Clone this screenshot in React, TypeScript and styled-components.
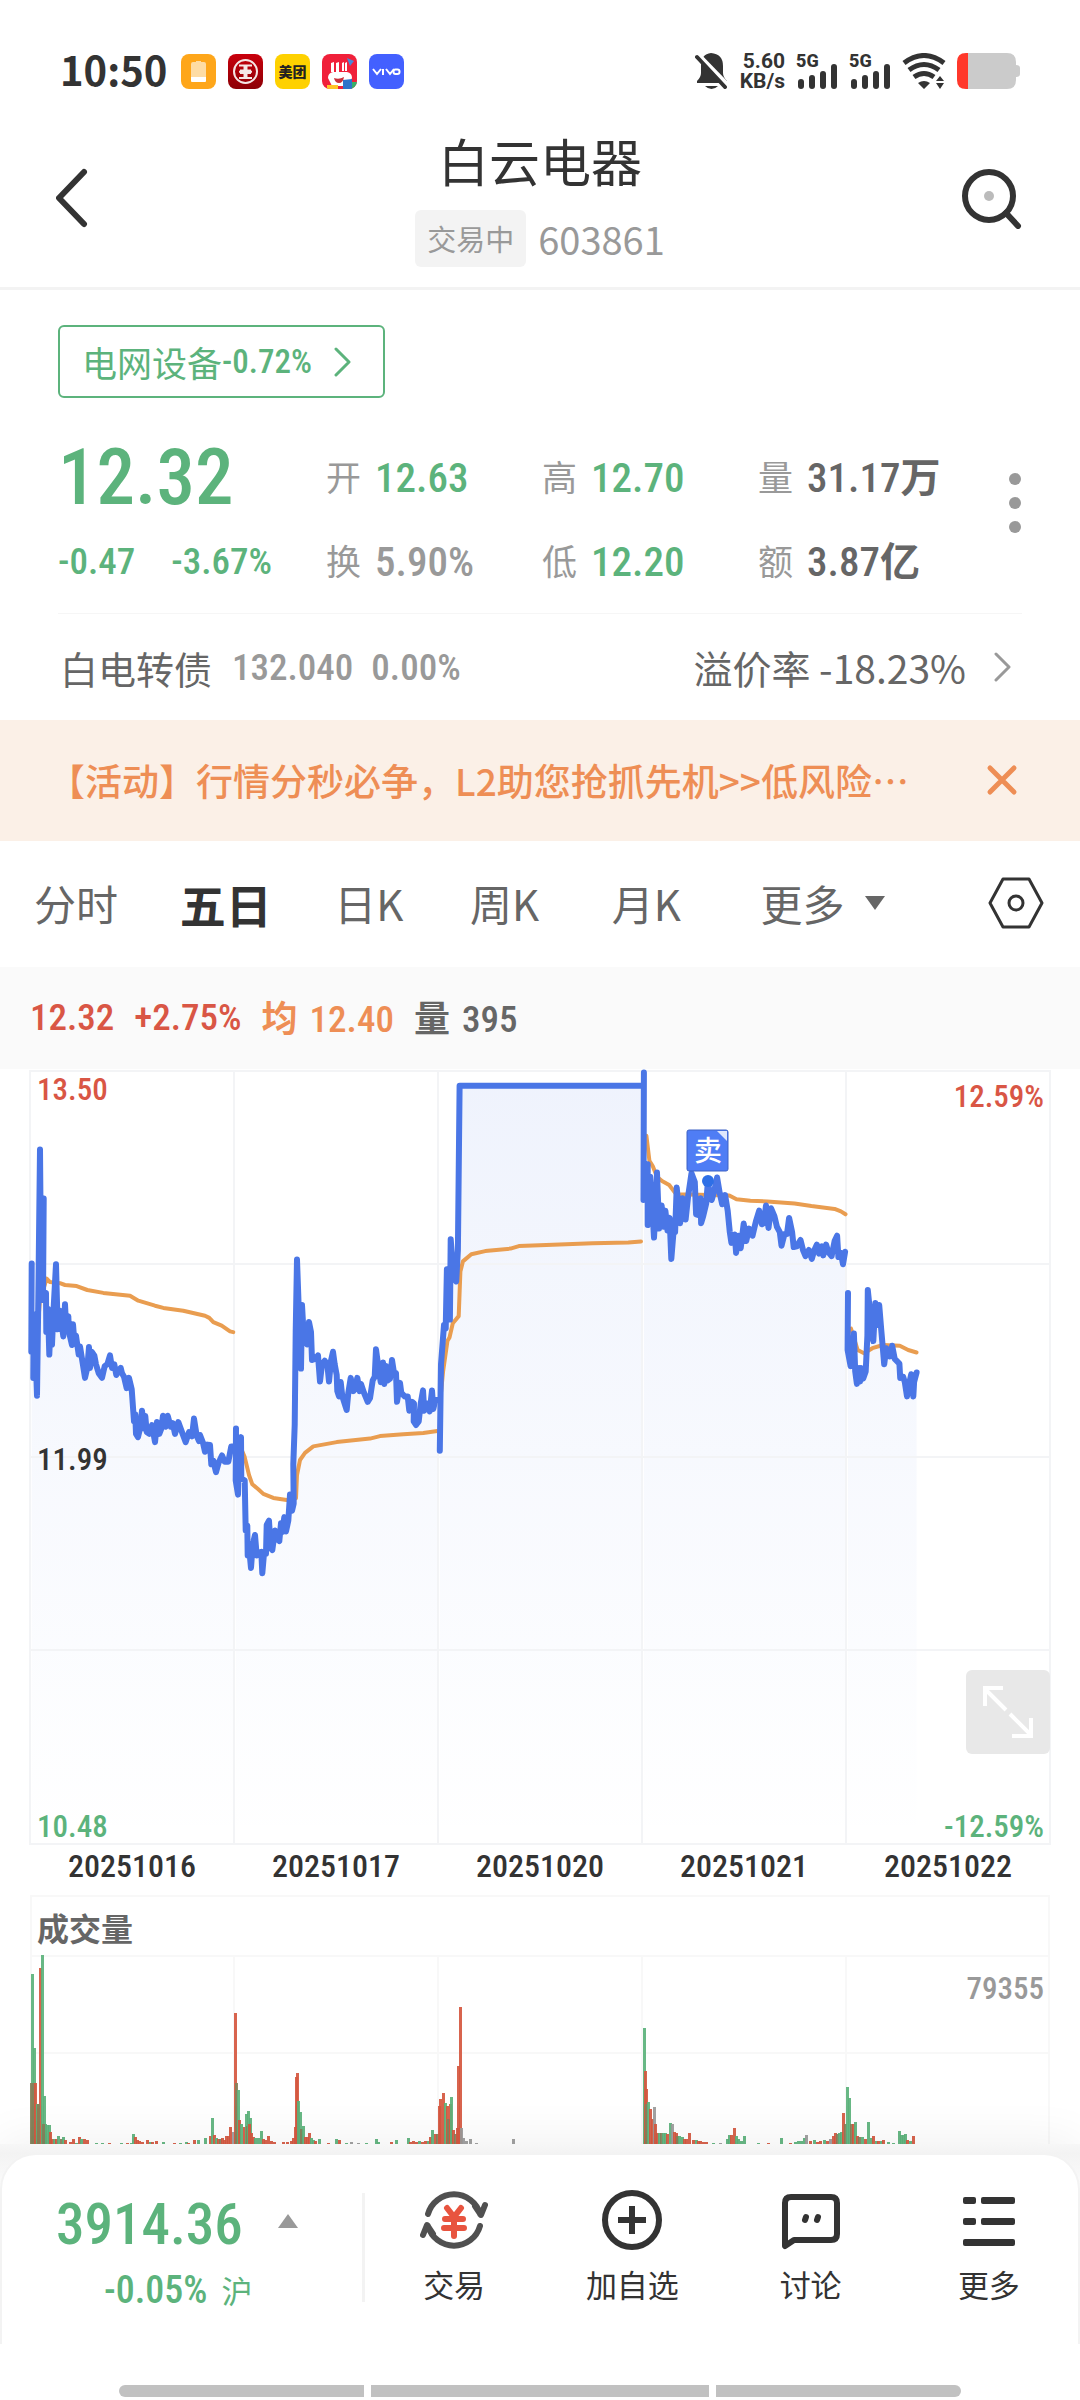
import React from "react";
import styled, { createGlobalStyle } from "styled-components";

const C = {
  green: "#5cb37c",
  red: "#d95645",
  orange: "#ee8e55",
  avg: "#e99d50",
  blue: "#4a76e6",
  ink: "#333",
  mid: "#666",
  soft: "#999",
  line: "#f3f3f3",
};
const SANS = `"Noto Sans CJK SC", "Noto Sans", sans-serif`;
const NUM = `"Roboto Condensed", "Noto Sans CJK SC", sans-serif`;

const Global = createGlobalStyle`
  * { box-sizing: border-box; }
  body { margin: 0; background: #fff; font-family: ${SANS}; color: ${C.ink}; }
  button { border: 0; padding: 0; margin: 0; background: none; font: inherit; color: inherit; cursor: pointer; }
  svg { display: block; }
`;

const Page = styled.div`
  display: flex;
  flex-direction: column;
  height: 100vh;
  background: #fff;
`;

/* ---------- status bar ---------- */
const StatusBar = styled.div`
  display: flex;
  justify-content: space-between;
  align-items: center;
  flex: none;
  padding: 53px 60px 0 60px;
`;
const StatusSide = styled.div<{ $gap: number }>`
  display: flex;
  align-items: center;
  gap: ${(p) => p.$gap}px;
  height: 36px;
`;
const Clock = styled.time`
  font-size: 40px;
  line-height: 36px;
  font-weight: 700;
  padding-bottom: 4px;
  margin-right: 2px;
`;
const AppIcon = styled.svg`
  width: 35px;
  height: 35px;
`;
const Speed = styled.div`
  display: flex;
  flex-direction: column;
  align-items: flex-end;
  font-family: Roboto, sans-serif;
  font-size: 21px;
  line-height: 20px;
  font-weight: 700;
`;
const SignalBox = styled.div`
  display: grid;
  font-family: Roboto, sans-serif;
  font-size: 18px;
  line-height: 16px;
  font-weight: 800;
  > * { grid-area: 1 / 1; }
`;

/* ---------- header ---------- */
const Header = styled.header`
  display: grid;
  grid-template-columns: 1fr auto 1fr;
  align-items: center;
  flex: none;
  padding: 20px 56px 0;
  border-bottom: 3px solid ${C.line};
`;
const IconButton = styled.button<{ $end?: boolean }>`
  display: inline-flex;
  justify-self: ${(p) => (p.$end ? "end" : "start")};
`;
const TitleBlock = styled.div`
  display: flex;
  flex-direction: column;
  align-items: center;
  gap: 20px;
  padding: 21px 0 20px;
`;
const Title = styled.h1`
  margin: 0;
  font-size: 51px;
  line-height: 60px;
  font-weight: 400;
`;
const SubTitle = styled.div`
  display: flex;
  align-items: center;
  gap: 12px;
  color: ${C.soft};
`;
const StateBadge = styled.span`
  padding: 0 12px;
  border-radius: 6px;
  background: ${C.line};
  font-size: 29px;
  line-height: 57px;
`;
const Code = styled.span`
  font-size: 38px;
  line-height: 57px;
`;

/* ---------- quote ---------- */
const Main = styled.main`
  flex: 1 1 0;
  min-height: 0;
  overflow: hidden;
`;
const Quote = styled.section`
  padding: 35px 58px 0;
`;
const SectorLink = styled.a`
  display: inline-flex;
  align-items: center;
  height: 73px;
  padding: 0 31px 0 22px;
  border: 2px solid ${C.green};
  border-radius: 6px;
  color: ${C.green};
  font-size: 35px;
  text-decoration: none;
  svg { margin-left: 22px; }
`;
const Num = styled.span<{ $size: number; $color?: string; $weight?: number }>`
  font-family: ${NUM};
  font-size: ${(p) => p.$size}px;
  font-weight: ${(p) => p.$weight ?? 500};
  color: ${(p) => p.$color ?? "inherit"};
  white-space: nowrap;
`;
const QuoteGrid = styled.div`
  display: grid;
  grid-template-columns: 67fr 54fr 54fr 66fr;
  grid-template-rows: 84px 84px;
  align-items: center;
  margin-top: 38px;
  padding-bottom: 9px;
  border-bottom: 1px solid #f6f6f6;
`;
const QuoteCell = styled.div<{ $gap?: number }>`
  display: flex;
  align-items: center;
  gap: ${(p) => p.$gap ?? 14}px;
  line-height: 60px;
`;
const Label = styled.span`
  padding-bottom: 4px;
  font-size: 35px;
  color: ${C.soft};
`;
const Unit = styled.span`
  font-size: 40px;
  font-weight: 700;
`;
const QuoteTail = styled.div`
  display: grid;
  grid-template-columns: 1fr auto;
  grid-template-rows: 84px 84px;
  grid-row: 1 / 3;
  grid-column: 4;
  align-items: center;
`;
const MoreDots = styled.button`
  grid-column: 2;
  grid-row: 1 / 3;
  padding-bottom: 34px;
`;
const BondRow = styled.a`
  display: flex;
  align-items: center;
  height: 106px;
  padding: 0 10px 0 2px;
  color: ${C.mid};
  font-size: 38px;
  text-decoration: none;
`;
const BondNums = styled.span`
  display: flex;
  gap: 18px;
  margin-left: 20px;
`;
const Premium = styled.span`
  display: flex;
  align-items: center;
  gap: 14px;
  margin-left: auto;
  font-size: 39px;
  svg { margin-left: 14px; }
`;

/* ---------- banner ---------- */
const Banner = styled.aside`
  display: flex;
  align-items: center;
  justify-content: space-between;
  height: 121px;
  padding: 0 62px 2px 48px;
  background: #fbf0e7;
  color: ${C.orange};
  font-size: 37px;
  font-weight: 500;
  white-space: nowrap;
`;

/* ---------- tabs ---------- */
const Tabs = styled.nav`
  display: grid;
  grid-template-columns: 146fr 155fr 136fr 142fr 149fr 228fr 54fr;
  align-items: center;
  height: 126px;
  padding: 0 36px 2px 34px;
`;
const Tab = styled.button<{ $on?: boolean }>`
  display: flex;
  align-items: center;
  gap: 20px;
  font-size: ${(p) => (p.$on ? 46 : 42)}px;
  font-weight: ${(p) => (p.$on ? 700 : 400)};
  color: ${(p) => (p.$on ? C.ink : C.mid)};
  line-height: 60px;
  white-space: nowrap;
`;

const InfoBar = styled.div`
  display: flex;
  align-items: center;
  gap: 20px;
  height: 102px;
  padding: 0 30px;
  background: #fafafa;
`;
const InfoItem = styled.span<{ $color: string }>`
  display: flex;
  align-items: baseline;
  gap: 12px;
  color: ${(p) => p.$color};
  line-height: 60px;
  b { font-size: 36px; }
`;

/* ---------- charts ---------- */
const Charts = styled.section`
  padding: 1px 30px 0;
`;
const Plot = styled.div`
  position: relative;
  svg { width: 100%; height: auto; overflow: visible; }
`;
const PlotLabel = styled.span<{ $top?: number; $bottom?: number; $right?: boolean; $color: string }>`
  position: absolute;
  ${(p) => (p.$right ? "right: 6px;" : "left: 7px;")}
  ${(p) => (p.$bottom !== undefined ? `bottom: ${p.$bottom}px;` : `top: ${p.$top}px;`)}
  font-family: ${NUM};
  font-size: 31px;
  font-weight: 500;
  line-height: 30px;
  color: ${(p) => p.$color};
`;
const Expand = styled.button`
  position: absolute;
  right: 0;
  bottom: 91px;
  display: grid;
  place-items: center;
  width: 84px;
  height: 84px;
  border-radius: 6px;
  background: #e8e8e8;
  svg { width: 54px; height: 54px; }
`;
const Dates = styled.div`
  display: grid;
  grid-template-columns: repeat(5, 1fr);
  height: 50px;
  text-align: center;
  font-family: ${NUM};
  font-size: 32px;
  font-weight: 500;
  line-height: 42px;
`;
const VolumeTitle = styled.h2`
  margin: 0;
  height: 60px;
  padding-left: 5px;
  border: 2px solid #f8f8f8;
  border-bottom: 0;
  font-size: 32px;
  line-height: 60px;
  font-weight: 700;
  color: ${C.mid};
`;

/* ---------- bottom bar ---------- */
const Footer = styled.footer`
  position: relative;
  flex: none;
  padding-top: 9px;
  background: linear-gradient(#f7f7f7, #f3f3f3 9px, #fff 60px);
  box-shadow: 0 -4px 44px rgba(0, 0, 0, 0.06);
`;
const FooterCard = styled.div`
  display: grid;
  grid-template-columns: 360fr 3px 713fr;
  height: 191px;
  border: 2px solid ${C.line};
  border-bottom: 0;
  border-radius: 36px 36px 0 0;
  background: #fff;
`;
const IndexButton = styled.button`
  display: flex;
  flex-direction: column;
  padding: 31px 0 0 54px;
  color: ${C.green};
`;
const IndexTop = styled.span`
  display: flex;
  align-items: center;
  gap: 34px;
  height: 76px;
  svg { margin-bottom: 6px; }
`;
const IndexBottom = styled.span`
  display: flex;
  align-items: center;
  gap: 14px;
  height: 56px;
  padding-left: 48px;
  font-size: 31px;
  line-height: 50px;
`;
const Rule = styled.i`
  height: 109px;
  margin-top: 38px;
  background: ${C.line};
`;
const Actions = styled.div`
  display: grid;
  grid-template-columns: repeat(4, 1fr);
`;
const Action = styled.button`
  display: flex;
  flex-direction: column;
  align-items: center;
  gap: 8px;
  padding-top: 34px;
  font-size: 31px;
  line-height: 50px;
`;
const NavArea = styled.div`
  display: grid;
  grid-template-columns: 245fr 338fr 245fr;
  gap: 7px;
  height: 56px;
  padding: 41px 119px 3px;
  background: #fff;
`;
const NavPill = styled.i<{ $r: string }>`
  background: #c1c1c1;
  border-radius: ${(p) => p.$r};
`;

/* ---------- data ---------- */
type Pt = [number, number];
const pairs = (s: string): Pt[] => s.trim().split(/\s+/).map((p) => p.split(",").map(Number) as Pt);
const early = (s: string): Pt[] => pairs(s).map(([x, y]) => [x / 3 - 30, y / 2.8 - 20]);
const late = (s: string): Pt[] => pairs(s).map(([x, y]) => [390 + x / 2.376, y / 2.8 - 20]);

const price: Pt[][] = [
  early(`95,598 94,845 101,740 100,918 105,800 111,968 115,700 120,279 124,700 131,416 129,700 138,680 139,790 144,725 148,853
  152,760 156,825 160,740 168,600 173,782 180,730 190,802 195,712 199,785 205,745 207,790 216,826 219,768 223,815 228,800 236,853
  240,830 247,870 255,918 262,890 267,832 270,890 275,845 283,855 288,880 296,905 306,918 314,885 322,880 330,855 336,890 343,880
  349,910 362,890 366,905 372,915 380,947 387,918 395,950 402,1040 406,1020 408,1075 414,1084 420,1060 426,1010 432,1060 436,1025
  440,1070 448,1075 456,1050 465,1098 471,1042 478,1075 484,1060 489,1024 497,1055 503,1024 512,1055 518,1045 525,1075 535,1042
  545,1068 557,1098 567,1070 576,1082 582,1032 590,1080 597,1095 600,1078 609,1100 615,1125 622,1105 630,1106 634,1160 640,1150
  648,1182 656,1155 666,1135 674,1153 685,1153 694,1110 702,1110`),
  early(`708,1060 707,1205 714,1245 716,1120 723,1084 724,1200 734,1205 737,1345 742,1332 743,1415 748,1400 753,1450 758,1385
  765,1358 770,1415 776,1410 784,1405 787,1465 792,1410 798,1410 800,1330 807,1318 812,1395 817,1400 825,1345 832,1370 838,1375
  843,1325 847,1350 853,1308 858,1348 865,1318 870,1245 876,1290 881,1270 880,1160 884,1050 887,790 891,587 896,720 903,892 906,714
  912,815 918,780 922,825 927,762 933,790 936,868 945,865 954,855 960,928 966,880 974,870 982,880 987,928 993,870 999,845 1004,880
  1010,910 1012,955 1017,970 1022,930 1027,970 1040,1008 1045,960 1052,918 1060,955 1065,950 1072,918 1079,955 1083,935 1092,960
  1103,985 1110,975 1118,925 1124,915 1128,838 1134,880 1142,930 1149,875 1153,935 1158,885 1163,925 1170,920 1176,868 1183,910
  1188,905 1191,985 1200,932 1204,960 1214,970 1223,970 1228,1010 1236,985 1242,990 1241,1040 1248,1050 1256,1040 1262,990
  1269,953 1273,1010 1282,990 1289,1012 1296,953 1300,1005 1306,980 1313,980`),
  late(`47,1122 50,880 57,770 61,780 64,614 71,755 73,530 80,640 86,648 90,560 94,100 527,100`),
  late(`532,63 531,420 541,320 541,490 547,355 552,440 556,525 560,440 563,343 568,500 574,435 579,495 583,450 588,505 593,470
  597,585 603,500 606,510 610,385 618,485 624,415 631,475 637,410 645,345 653,370 656,460 662,462 667,415 668,485 673,465 680,430
  684,368 688,400 693,420 699,395 706,357 712,400 718,432 725,406 731,450 736,510 740,540 748,517 751,568 757,520 762,555 769,486
  775,535 782,500 790,520 798,480 806,450 812,488 817,485 822,435 828,498 834,443 842,465 848,495 855,510 859,548 866,515 872,515
  877,470 884,510 888,552 895,550 904,532 910,560 916,577 924,560 931,585 937,560 943,545 948,570 955,550 958,575 965,545 970,565
  978,577 985,535 991,520 994,580 1000,568 1005,600 1010,565`),
  late(`1017,680 1016,840 1023,885 1027,850 1031,794 1034,900 1038,935 1043,890 1046,928 1048,890 1053,920 1059,900 1063,800
  1064,672 1070,740 1077,815 1082,708 1087,770 1091,714 1096,785 1100,840 1103,880 1108,835 1117,858 1122,828 1128,865 1139,878
  1141,918 1148,915 1152,930 1157,970 1162,935 1167,908 1172,970 1174,930 1180,903`),
];

const average: Pt[][] = [
  early(`103,740 106,795 112,790 120,700 140,640 150,650 180,653 195,658 230,661 262,672 310,680 390,688 415,702 465,716 490,722
  550,730 615,744 628,750 640,762 665,772 690,788 700,790`),
  early(`716,1100 734,1140 747,1190 757,1216 775,1230 790,1243 820,1254 860,1260 888,1255 891,1190 900,1148 915,1128 940,1110
  1010,1098 1110,1088 1140,1081 1210,1076 1270,1072 1312,1067`),
  late(`50,960 55,900 65,815 70,805 78,765 92,745 96,620 102,592 122,572 155,563 215,556 235,549 300,546 410,541 495,539 525,536`),
  late(`538,240 545,310 553,325 563,355 575,367 592,378 606,400 615,404 735,407 752,418 785,422 825,424 890,430 930,437 985,445
  1000,452 1011,460`),
  late(`1024,780 1040,840 1055,849 1075,835 1100,826 1140,828 1160,840 1180,847`),
];

const line = (pts: Pt[]) => pts.map(([x, y], i) => `${i ? "L" : "M"}${x.toFixed(1)} ${y.toFixed(1)}`).join("");
const area = (pts: Pt[]) => `${line(pts)}L${pts[pts.length - 1][0].toFixed(1)} 775L${pts[0][0].toFixed(1)} 775Z`;

/* x, height and colour of each volume bar: g falls, r rises, n unchanged, b mixed */
const volume = `2,170g 4,96g 1,61b 3,61b 5,61r 7,40g 8,36r 10,176r 12,189g 8,40b 14,48g 15,20g 13,20b 17,19g 19,19g 20,12r 22,5r 24,5g 26,5r 28,8g 31,5b 33,7g
35,4r 40,2r 43,5r 46,1g 49,7r 51,5g 54,5r 57,4r 66,1g 72,1g 79,1r 91,1g 97,1r 101,1g 103,10g 105,7r 107,4r 109,3r 112,2r 117,4r 120,2g 122,2r 126,3r
133,2g 144,1r 150,1g 156,2g 158,1r 164,4r 168,4g 175,6g 180,8r 182,26g 184,9r 186,6g 188,5r 190,5b 192,6r 194,4r 196,8r 198,8r 200,17r 203,12n
205,131r 206,61b 208,54g 209,24r 211,20g 214,17r 216,30g 217,18b 218,33g 220,26g 219,20r 221,11r 223,7r 225,6g 228,6g 231,13g 233,5r 235,4r 238,8r
241,3r 244,2r 253,2r 257,2r 261,3r 263,6r 265,17r 266,67r 267,71r 268,43g 270,32g 271,15b 273,18g 275,7r 277,7r 279,11r 281,6g 283,4g 285,3r 289,5g
298,1r 306,5g 309,4r 316,1g 321,2n 328,1n 336,1g 346,5g 348,2g 361,2r 366,4g 378,6g 380,2r 383,3r 386,2r 389,3g 392,2r 395,3r 398,3g 400,7r 402,14g
405,10r 407,10b 409,38r 410,45r 413,51r 415,41g 417,38r 418,25b 420,40r 421,47g 423,14r 425,10b 427,16r
428,78r 430,137r 431,16n 433,6n 436,3n 440,5n 446,1n 483,5n 614,116g 615,73r 616,55r 616,40b 618,42g 620,35r 622,25r 624,37n 625,20r 627,11r 629,11g
631,11b 633,11g 635,11g 637,10r 640,21g 642,20n 644,12r 646,11r 647,8b 649,8g 652,7g 654,5r 656,5r 659,11r 663,4r 666,4g 668,3r 670,3r 673,2r 676,2r
683,1g 690,1n 697,5g 699,9g 701,9r 704,16r 706,8g 708,5g 711,3g 714,8g 728,1g 738,1r 751,6g 760,1r 765,2g 768,3g 771,3g 774,6g 776,9n 780,3r 784,4g
787,2r 790,3r 794,4g 797,3r 800,5n 803,8r 805,11r 807,10b 809,11g 811,12g 813,31r 815,20b 817,57g 819,46g 821,20b 823,20r 825,22g 827,8r 829,7b 832,7g
835,5r 838,22g 841,6g 843,8r 846,3g 848,3r 851,3g 853,4r 858,2g 863,1g 869,13g 871,9g 873,9g 875,10g 877,4r 880,3g 883,8r`;
const VOL_COLORS: Record<string, string> = { g: "#5bb27b", r: "#d5573f", n: "#9a9a9a", b: "#86805a" };

const ChevronRight = ({ color, w = 3 }: { color: string; w?: number }) => (
  <svg width="18" height="30" viewBox="0 0 18 30" fill="none" stroke={color} strokeWidth={w} strokeLinecap="round" strokeLinejoin="round">
    <path d="M2 2l13 13L2 28" />
  </svg>
);

const Signal = () => (
  <SignalBox>
    <span>5G</span>
    <svg width="42" height="36" viewBox="0 0 42 36" fill={C.ink}>
      <rect x="2" y="26" width="6" height="10" rx="3" />
      <rect x="13" y="22" width="6" height="14" rx="3" />
      <rect x="24" y="18" width="6" height="18" rx="3" />
      <rect x="35" y="11" width="6" height="25" rx="3" />
    </svg>
  </SignalBox>
);

const stats = [
  [["开", "12.63", C.green], ["高", "12.70", C.green]],
  [["换", "5.90%", C.soft], ["低", "12.20", C.green]],
];

export default function App() {
  return (
    <>
      <Global />
      <Page lang="zh-CN">
        <StatusBar>
          <StatusSide $gap={12}>
            <Clock>10:50</Clock>
            <AppIcon viewBox="0 0 35 35">
              <rect width="35" height="35" rx="8" fill="#fea61a" />
              <path d="M12 8h3V7h5v1h3q2 0 2 2v13H10V10q0-2 2-2z" fill="#fedca4" />
              <path d="M10 23h15v4q0 1-1 1H11q-1 0-1-1z" fill="#fff" />
            </AppIcon>
            <AppIcon viewBox="0 0 35 35">
              <defs>
                <linearGradient id="bank" x2="0" y2="1">
                  <stop stopColor="#c9000c" />
                  <stop offset="1" stopColor="#8c0006" />
                </linearGradient>
              </defs>
              <rect width="35" height="35" rx="8" fill="url(#bank)" />
              <g fill="none" stroke="#f5e6e6" strokeWidth="2">
                <circle cx="17.500" cy="17.500" r="11.500" />
                <path d="M11 11.500h5.500v5H12M24 11.500h-5.500v5H23M11 24h5.500v-5H12M24 24h-5.500v-5H23M11 17.700h13" />
              </g>
            </AppIcon>
            <AppIcon viewBox="0 0 35 35">
              <rect width="35" height="35" rx="8" fill="#fed100" />
              <text x="17.500" y="22.500" textAnchor="middle" fontFamily="Noto Sans CJK SC" fontWeight="900" fontSize="14" fill="#222">美团</text>
            </AppIcon>
            <AppIcon viewBox="0 0 35 35">
              <defs>
                <clipPath id="round"><rect width="35" height="35" rx="8" /></clipPath>
              </defs>
              <g clipPath="url(#round)">
                <rect width="35" height="35" fill="#f0203a" />
                <path d="M25 4l7 3-4 5z" fill="#4b86d8" />
                <path d="M28 28h7v7h-7z" fill="#35b06a" />
                <path d="M6 24q0-5 5-6h14q5 1 5 6l-4 8H10z" fill="#fff" />
                <path d="M12 24q5 2 10-1-1 6-5 6-4 0-5-5z" fill="#c9303a" />
                <path d="M5 31h11v4H5z" fill="#ffc526" />
                <path d="M21 26l9-1v10h-9z" fill="#2f73c9" />
                <path d="M9 9l3-1v10H9zM14 9l3-1v10h-3zM20 9l2-1v9h-2zM23 9l2-1v9h-2z" fill="#fff" />
              </g>
            </AppIcon>
            <AppIcon viewBox="0 0 35 35">
              <rect width="35" height="35" rx="8" fill="#4360ff" />
              <g fill="none" stroke="#fff" strokeWidth="2">
                <path d="M4 15l4 5 4-5M14 15v6M17 15l4 5 4-5" />
                <rect x="24.500" y="15.500" width="6" height="4.500" rx="2" />
              </g>
            </AppIcon>
          </StatusSide>
          <StatusSide $gap={11}>
            <svg width="34" height="36" viewBox="0 0 34 36">
              <path d="M16 0q12 1 12 13v7q0 4 4 8v2H2v-2q4-4 4-8v-7Q6 1 16 0z" fill={C.ink} />
              <path d="M10 33h13q-3 3-6.500 3T10 33z" fill={C.ink} />
              <path d="M3 1l29 30" stroke="#fff" strokeWidth="4" />
              <path d="M2 4l28 30" stroke={C.ink} strokeWidth="4" strokeLinecap="round" />
            </svg>
            <Speed><span>5.60</span><span>KB/s</span></Speed>
            <Signal />
            <Signal />
            <svg width="44" height="36" viewBox="0 0 44 36">
              <g fill="none" stroke={C.ink} strokeWidth="5">
                <path d="M2 10q20-15 40 0" />
                <path d="M7 17q15-11 30 0" />
                <path d="M12 24q10-7 20 0" />
              </g>
              <path d="M16 30q6-4 12 0l-6 6zM34 28l4-5 4 5zM34 30h8l-4 6z" fill={C.ink} />
            </svg>
            <svg width="63" height="36" viewBox="0 0 63 36">
              <path d="M10 0h40q9 0 9 9v3q4 0 4 3v6q0 3-4 3v3q0 9-9 9H10z" fill="#cbcbcb" />
              <path d="M11 0v36H9q-9 0-9-9V9q0-9 9-9z" fill="#ff382b" />
            </svg>
          </StatusSide>
        </StatusBar>

        <Header>
          <IconButton aria-label="返回">
            <svg width="34" height="60" viewBox="0 0 34 60" fill="none" stroke={C.ink} strokeWidth="6" strokeLinecap="round" strokeLinejoin="round">
              <path d="M28 4L3 30l25 26" />
            </svg>
          </IconButton>
          <TitleBlock>
            <Title>白云电器</Title>
            <SubTitle>
              <StateBadge>交易中</StateBadge>
              <Code>603861</Code>
            </SubTitle>
          </TitleBlock>
          <IconButton $end aria-label="搜索">
            <svg width="64" height="62" viewBox="0 0 64 62" fill="none" stroke={C.ink} strokeWidth="6" strokeLinecap="round">
              <circle cx="29" cy="29" r="24" />
              <path d="M46 46l12 13" />
              <circle cx="29" cy="29" r="5" fill="#bbb" stroke="none" />
            </svg>
          </IconButton>
        </Header>

        <Main>
          <Quote>
            <SectorLink href="#sector">
              电网设备<Num $size={33}>-0.72%</Num>
              <ChevronRight color={C.green} />
            </SectorLink>
            <QuoteGrid>
              <QuoteCell><Num $size={77} $color={C.green}>12.32</Num></QuoteCell>
              {stats[0].map(([k, v, c]) => (
                <QuoteCell key={k}><Label>{k}</Label><Num $size={41} $color={c}>{v}</Num></QuoteCell>
              ))}
              <QuoteTail>
                <QuoteCell><Label>量</Label><Num $size={41} $color={C.mid}>31.17<Unit>万</Unit></Num></QuoteCell>
                <QuoteCell><Label>额</Label><Num $size={41} $color={C.mid}>3.87<Unit>亿</Unit></Num></QuoteCell>
                <MoreDots aria-label="更多指标">
                  <svg width="14" height="60" viewBox="0 0 14 60" fill="#999">
                    <circle cx="7" cy="6" r="6" /><circle cx="7" cy="30" r="6" /><circle cx="7" cy="54" r="6" />
                  </svg>
                </MoreDots>
              </QuoteTail>
              <QuoteCell $gap={36}>
                <Num $size={37} $color={C.green}>-0.47</Num>
                <Num $size={37} $color={C.green}>-3.67%</Num>
              </QuoteCell>
              {stats[1].map(([k, v, c]) => (
                <QuoteCell key={k}><Label>{k}</Label><Num $size={41} $color={c}>{v}</Num></QuoteCell>
              ))}
            </QuoteGrid>
            <BondRow href="#bond">
              白电转债
              <BondNums>
                <Num $size={37} $color={C.soft}>132.040</Num>
                <Num $size={37} $color={C.soft}>0.00%</Num>
              </BondNums>
              <Premium>
                <span>溢价率 -18.23%</span>
                <ChevronRight color="#999" />
              </Premium>
            </BondRow>
          </Quote>

          <Banner>
            <span>【活动】行情分秒必争，L2助您抢抓先机&gt;&gt;低风险…</span>
            <IconButton aria-label="关闭">
              <svg width="32" height="32" viewBox="0 0 32 32" stroke={C.orange} strokeWidth="5" strokeLinecap="round">
                <path d="M4 4l24 24M28 4L4 28" />
              </svg>
            </IconButton>
          </Banner>

          <Tabs>
            <Tab>分时</Tab>
            <Tab $on aria-current="page">五日</Tab>
            <Tab>日K</Tab>
            <Tab>周K</Tab>
            <Tab>月K</Tab>
            <Tab>
              更多
              <svg width="22" height="16" viewBox="0 0 22 16" fill={C.mid}><path d="M1 1h20L11 15z" /></svg>
            </Tab>
            <IconButton aria-label="设置">
              <svg width="56" height="52" viewBox="0 0 56 52" fill="none" stroke={C.ink} strokeWidth="3" strokeLinejoin="round">
                <path d="M15 2h26l13 24-13 24H15L2 26z" />
                <circle cx="28" cy="26" r="7" />
              </svg>
            </IconButton>
          </Tabs>

          <InfoBar>
            <InfoItem $color={C.red}><Num $size={37}>12.32</Num></InfoItem>
            <InfoItem $color={C.red}><Num $size={37}>+2.75%</Num></InfoItem>
            <InfoItem $color={C.orange}><b>均</b><Num $size={37}>12.40</Num></InfoItem>
            <InfoItem $color={C.mid}><b>量</b><Num $size={37}>395</Num></InfoItem>
          </InfoBar>

          <Charts>
            <Plot>
              <svg viewBox="0 0 1020 775" role="img" aria-label="五日价格走势">
                <defs>
                  <linearGradient id="fade" gradientUnits="userSpaceOnUse" x1="0" y1="0" x2="0" y2="775">
                    <stop stopColor="#4a76e6" stopOpacity="0.09" />
                    <stop offset="0.87" stopColor="#4a76e6" stopOpacity="0.01" />
                    <stop offset="1" stopColor="#4a76e6" stopOpacity="0" />
                  </linearGradient>
                </defs>
                {price.map((d, i) => <path key={i} d={area(d)} fill="url(#fade)" />)}
                <g stroke="#f3f4f6" strokeWidth="2" fill="none">
                  <path d="M0 1H1020M0 194H1020M0 387H1020M0 580H1020M0 774H1020" />
                  <path d="M0 0V775M204 0V775M408 0V775M612 0V775M816 0V775M1020 0V775" />
                </g>
                <g fill="none" stroke={C.avg} strokeWidth="4" strokeLinecap="round" strokeLinejoin="round">
                  {average.map((d, i) => <path key={i} d={line(d)} />)}
                </g>
                <g fill="none" stroke={C.blue} strokeWidth="6" strokeLinecap="round" strokeLinejoin="round">
                  {price.map((d, i) => <path key={i} d={line(d)} />)}
                </g>
                <circle cx="678" cy="111" r="6" fill="#2e6fe6" />
                <rect x="657" y="60" width="41" height="41" rx="2" fill="#4f7df5" stroke="#3f63c4" />
                <path d="M687 61h10v10z" fill="#dfe7fd" />
                <text x="678" y="91" textAnchor="middle" fontFamily="Noto Sans CJK SC" fontWeight="500" fontSize="28" fill="#fff">卖</text>
              </svg>
              <PlotLabel $top={5} $color={C.red}>13.50</PlotLabel>
              <PlotLabel $top={12} $right $color={C.red}>12.59%</PlotLabel>
              <PlotLabel $top={375} $color={C.ink}>11.99</PlotLabel>
              <PlotLabel $bottom={3} $color={C.green}>10.48</PlotLabel>
              <PlotLabel $bottom={3} $right $color={C.green}>-12.59%</PlotLabel>
              <Expand aria-label="全屏">
                <svg viewBox="0 0 54 54" fill="none" stroke="#fff" strokeWidth="4">
                  <path d="M22 3H4v18M4 4l21 21M31 51h19V33M50 50L29 29" />
                </svg>
              </Expand>
            </Plot>
            <Dates>
              {["20251016", "20251017", "20251020", "20251021", "20251022"].map((d) => <span key={d}>{d}</span>)}
            </Dates>
            <VolumeTitle>成交量</VolumeTitle>
            <Plot>
              <svg viewBox="0 0 1020 190" role="img" aria-label="成交量">
                <g stroke="#f8f8f8" strokeWidth="2" fill="none">
                  <path d="M0 1H1020M0 98H1020" />
                  <path d="M1 0V190M204 0V190M408 0V190M612 0V190M816 0V190M1019 0V190" />
                </g>
                {volume.split(/\s+/).map((v, i) => {
                  const [x, rest] = v.split(",");
                  const h = parseInt(rest, 10);
                  return <rect key={i} x={Number(x) - 1} y={189 - h} width="3" height={h + 1} fill={VOL_COLORS[rest.slice(-1)]} fillOpacity="0.92" />;
                })}
              </svg>
              <PlotLabel $top={19} $right $color={C.soft}>79355</PlotLabel>
            </Plot>
          </Charts>
        </Main>

        <Footer>
          <FooterCard>
            <IndexButton>
              <IndexTop>
                <Num $size={57}>3914.36</Num>
                <svg width="22" height="16" viewBox="0 0 22 16" fill="#999"><path d="M11 1l10 14H1z" /></svg>
              </IndexTop>
              <IndexBottom><Num $size={38}>-0.05%</Num>沪</IndexBottom>
            </IndexButton>
            <Rule />
            <Actions>
              <Action>
                <svg width="68" height="62" viewBox="0 0 68 62" fill="none" strokeWidth="6" strokeLinecap="round" strokeLinejoin="round">
                  <g stroke="#505050">
                    <path d="M8 25A27 27 0 0 1 60 25M65 16l-4 10-6-9" />
                    <path d="M60 37A27 27 0 0 1 8 37M3 46l4-10 6 9" />
                  </g>
                  <path d="M27 19l7 9 7-9M25 30h18M24 39h20M34 30v17" stroke="#e8543f" strokeWidth="6" />
                </svg>
                交易
              </Action>
              <Action>
                <svg width="62" height="62" viewBox="0 0 62 62" fill="none" stroke={C.ink} strokeWidth="6">
                  <circle cx="31" cy="31" r="27" />
                  <path d="M31 20v22M20 31h22" strokeLinecap="square" />
                </svg>
                加自选
              </Action>
              <Action>
                <svg width="62" height="62" viewBox="0 0 62 62" fill="none" stroke={C.ink} strokeWidth="6" strokeLinecap="round" strokeLinejoin="round">
                  <path d="M5 57V14q0-6 6-6h40q6 0 6 6v31q0 6-6 6H14z" />
                  <path d="M26 28l-1 3M38 28l-1 3" />
                </svg>
                讨论
              </Action>
              <Action>
                <svg width="62" height="62" viewBox="0 0 62 62" fill={C.ink}>
                  <rect x="5" y="8" width="13" height="7" rx="2" /><rect x="23" y="8" width="34" height="7" rx="2" />
                  <rect x="5" y="29" width="13" height="7" rx="2" /><rect x="23" y="29" width="34" height="7" rx="2" />
                  <rect x="5" y="50" width="52" height="7" rx="2" />
                </svg>
                更多
              </Action>
            </Actions>
          </FooterCard>
          <NavArea>
            <NavPill $r="6px 0 0 6px" />
            <NavPill $r="0" />
            <NavPill $r="0 6px 6px 0" />
          </NavArea>
        </Footer>
      </Page>
    </>
  );
}
